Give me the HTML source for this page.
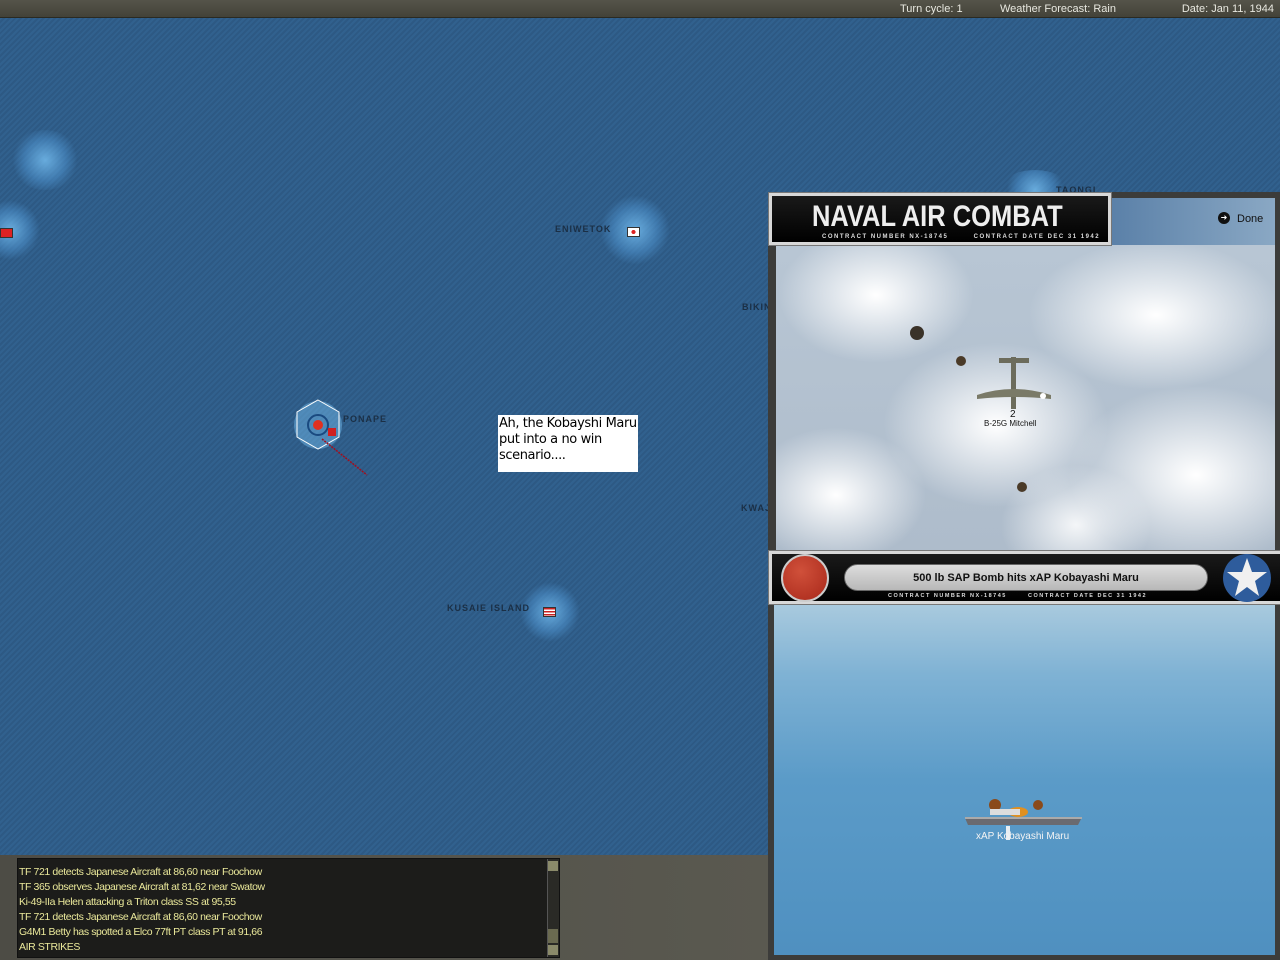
<!DOCTYPE html>
<html><head><meta charset="utf-8"><style>
*{margin:0;padding:0;box-sizing:border-box}
body{width:1280px;height:960px;overflow:hidden;position:relative;background:#2e5b88;font-family:"Liberation Sans",sans-serif}
.abs{position:absolute}
.map{left:0;top:18px;width:1280px;height:942px;background:repeating-linear-gradient(135deg,#31618e 0 2px,#2d5984 2px 4px)}
.top{left:0;top:0;width:1280px;height:18px;background:linear-gradient(#55544a,#434238);border-bottom:1px solid #2a2a22;color:#e8e8e0;font-size:11px;white-space:nowrap}
.top span{position:absolute;top:3px}
.glow{border-radius:50%;background:radial-gradient(circle,rgba(110,180,230,.9) 0,rgba(80,150,210,.5) 45%,rgba(60,120,180,0) 70%)}
.lbl{font-size:9px;font-weight:bold;color:#1b2f45;letter-spacing:1px}
.flag{width:13px;height:10px;background:#fff;border:1px solid #333}
.panel{left:768px;top:192px;width:512px;height:768px;background:#3c3c3a}
.clouds{left:776px;top:245px;width:499px;height:306px;background:
radial-gradient(ellipse 130px 90px at 100px 50px,#fff,rgba(255,255,255,0) 75%),
radial-gradient(ellipse 170px 100px at 380px 70px,#fff,rgba(255,255,255,0) 75%),
radial-gradient(ellipse 150px 110px at 220px 180px,#fff,rgba(255,255,255,0) 75%),
radial-gradient(ellipse 170px 120px at 420px 230px,#fff,rgba(255,255,255,0) 75%),
radial-gradient(ellipse 120px 90px at 60px 250px,#fff,rgba(255,255,255,0) 75%),
radial-gradient(ellipse 100px 80px at 300px 280px,#f4f6f8,rgba(255,255,255,0) 75%),
linear-gradient(#b8c6d4,#aebccb)}
.sea{left:774px;top:604px;width:501px;height:351px;background:linear-gradient(#a9cade 0,#7fb2d4 20%,#5b9bc8 50%,#4f90c0 100%)}
.plate{background:linear-gradient(#1a1a1a,#000);border:3px solid #d8d8d8;box-shadow:0 0 0 1px #777}
.small{font-size:6px;font-weight:bold;color:#ddd;letter-spacing:1.5px;white-space:nowrap}
.bottom{left:0;top:855px;width:768px;height:105px;background:linear-gradient(90deg,#4d4c45,#5a5950)}
.log{left:17px;top:858px;width:543px;height:100px;background:#1c1c1a;border:1px solid #111;color:#eae89a;font-size:10.5px;line-height:15px;padding:6px 0 0 1px;letter-spacing:-.4px}
</style></head><body>
<div class="abs map"></div>
<div class="abs glow" style="left:10px;top:130px;width:70px;height:60px"></div>
<div class="abs glow" style="left:-20px;top:200px;width:60px;height:60px"></div>
<div class="abs glow" style="left:600px;top:195px;width:70px;height:70px"></div>
<div class="abs glow" style="left:520px;top:582px;width:60px;height:60px"></div>
<div class="abs glow" style="left:1000px;top:170px;width:70px;height:40px"></div>
<div class="abs flag" style="left:0;top:228px;background:#d22"></div>
<div class="abs flag" style="left:627px;top:227px;background:radial-gradient(circle,#d22 30%,#fff 32%)"></div>
<div class="abs flag" style="left:543px;top:607px;background:repeating-linear-gradient(#c22 0 1.5px,#fff 1.5px 3px)"></div>
<div class="abs lbl" style="left:555px;top:224px">ENIWETOK</div>
<div class="abs lbl" style="left:343px;top:414px">PONAPE</div>
<div class="abs lbl" style="left:447px;top:603px">KUSAIE ISLAND</div>
<div class="abs lbl" style="left:742px;top:302px">BIKIN</div>
<div class="abs lbl" style="left:741px;top:503px">KWAJ</div>
<div class="abs lbl" style="left:1056px;top:185px">TAONGI</div>
<svg class="abs" style="left:290px;top:395px" width="90" height="90">
<circle cx="28" cy="30" r="24" fill="rgba(120,190,240,.45)"/>
<polygon points="28,5 49,17 49,42 28,54 7,42 7,17" fill="none" stroke="#fff" stroke-width="1"/>
<circle cx="28" cy="30" r="10" fill="none" stroke="#1a4a80" stroke-width="2"/>
<circle cx="28" cy="30" r="5" fill="#e03020"/>
<rect x="38" y="33" width="8" height="8" fill="#d02020"/>
<line x1="32" y1="44" x2="77" y2="80" stroke="#a01020" stroke-width="1.5" stroke-dasharray="2,1"/>
</svg>
<div class="abs" style="left:498px;top:415px;width:140px;height:57px;background:#fff;color:#000;font-size:13px;line-height:16px;padding:1px 1px;font-family:'DejaVu Sans',sans-serif;letter-spacing:-.4px">Ah, the Kobayshi Maru put into a no win scenario....</div>
<div class="abs top"><span style="left:900px">Turn cycle: 1</span><span style="left:1000px">Weather Forecast: Rain</span><span style="right:6px">Date: Jan 11, 1944</span></div>
<div class="abs panel"></div>
<div class="abs clouds"></div>
<div class="abs" style="left:1110px;top:198px;width:165px;height:47px;background:linear-gradient(90deg,#5a80a8,#8aa8c4)"></div>
<div class="abs" style="left:1218px;top:212px;width:12px;height:12px;border-radius:50%;background:#111;color:#fff;font-size:8px;text-align:center;line-height:12px">➜</div>
<div class="abs" style="left:1237px;top:213px;font-size:11px;color:#111">Done</div>
<div class="abs plate" style="left:769px;top:193px;width:342px;height:52px">
<div class="abs" style="left:40px;top:4px;font-size:30px;font-weight:bold;color:#eee;transform:scaleX(.85);transform-origin:left;white-space:nowrap">NAVAL AIR COMBAT</div>
<div class="abs small" style="left:50px;top:38px">CONTRACT NUMBER NX-18745 &nbsp;&nbsp;&nbsp;&nbsp;&nbsp;&nbsp; CONTRACT DATE DEC 31 1942</div>
</div>
<svg class="abs" style="left:975px;top:355px" width="80" height="60">
<rect x="36" y="2" width="5" height="52" fill="#6c6c5c"/>
<rect x="24" y="3" width="30" height="5" fill="#6c6c5c"/>
<path d="M2 40 Q38 28 76 40 L76 44 Q38 40 2 44Z" fill="#7a7a68"/>
<circle cx="68" cy="41" r="3" fill="#fff"/>
</svg>
<div class="abs" style="left:1010px;top:409px;font-size:10px;color:#111">2</div>
<div class="abs" style="left:984px;top:419px;font-size:8px;color:#111">B-25G Mitchell</div>
<div class="abs" style="left:910px;top:326px;width:14px;height:14px;border-radius:50%;background:#3a3228"></div>
<div class="abs" style="left:956px;top:356px;width:10px;height:10px;border-radius:50%;background:#4a3a28"></div>
<div class="abs" style="left:1017px;top:482px;width:10px;height:10px;border-radius:50%;background:#4a3a28"></div>
<div class="abs sea"></div>
<div class="abs plate" style="left:769px;top:551px;width:511px;height:53px;border-width:3px 0 3px 3px"></div>
<div class="abs" style="left:781px;top:554px;width:48px;height:48px;border-radius:50%;background:radial-gradient(circle at 40% 35%,#d0503a,#a8281a);border:2px solid #ccc"></div>
<div class="abs" style="left:844px;top:564px;width:364px;height:27px;border-radius:14px;background:linear-gradient(#ddd,#b8b8b8);border:1px solid #666;text-align:center;font-size:11px;font-weight:bold;line-height:26px;color:#111">500 lb SAP Bomb hits xAP Kobayashi Maru</div>
<div class="abs small" style="left:888px;top:593px;font-size:5.5px">CONTRACT NUMBER NX-18745 &nbsp;&nbsp;&nbsp;&nbsp;&nbsp; CONTRACT DATE DEC 31 1942</div>
<svg class="abs" style="left:1222px;top:553px" width="50" height="50"><circle cx="25" cy="25" r="24" fill="#2e5c9c"/><polygon points="25,5 30,19 45,19 33,28 37,43 25,34 13,43 17,28 5,19 20,19" fill="#f0f0f0"/></svg>
<svg class="abs" style="left:960px;top:790px" width="125" height="50">
<circle cx="35" cy="15" r="6" fill="#8a4a1a"/><circle cx="78" cy="15" r="5" fill="#8a4a1a"/>
<ellipse cx="58" cy="22" rx="10" ry="5" fill="#e09020"/>
<rect x="30" y="19" width="30" height="6" fill="#ddd"/>
<path d="M5 28 L122 27 L118 35 L8 35Z" fill="#6a6a70"/>
<rect x="5" y="27" width="117" height="2" fill="#aaa"/>
<rect x="46" y="36" width="4" height="14" fill="#e8eef2"/>
</svg>
<div class="abs" style="left:976px;top:831px;font-size:10px;color:#f4f4f4">xAP Kobayashi Maru</div>
<div class="abs bottom"></div>
<div class="abs log">TF 721 detects Japanese Aircraft at 86,60 near Foochow<br>TF 365 observes Japanese Aircraft at 81,62 near Swatow<br>Ki-49-IIa Helen attacking a Triton class SS at 95,55<br>TF 721 detects Japanese Aircraft at 86,60 near Foochow<br>G4M1 Betty has spotted a Elco 77ft PT class PT at 91,66<br>AIR STRIKES</div>
<div class="abs" style="left:547px;top:859px;width:12px;height:98px;background:#2a2a26;border-left:1px solid #555"></div>
<div class="abs" style="left:548px;top:861px;width:10px;height:10px;background:#8a8a6a"></div>
<div class="abs" style="left:548px;top:929px;width:10px;height:14px;background:#6a6a50"></div>
<div class="abs" style="left:548px;top:945px;width:10px;height:10px;background:#8a8a6a"></div>
</body></html>
